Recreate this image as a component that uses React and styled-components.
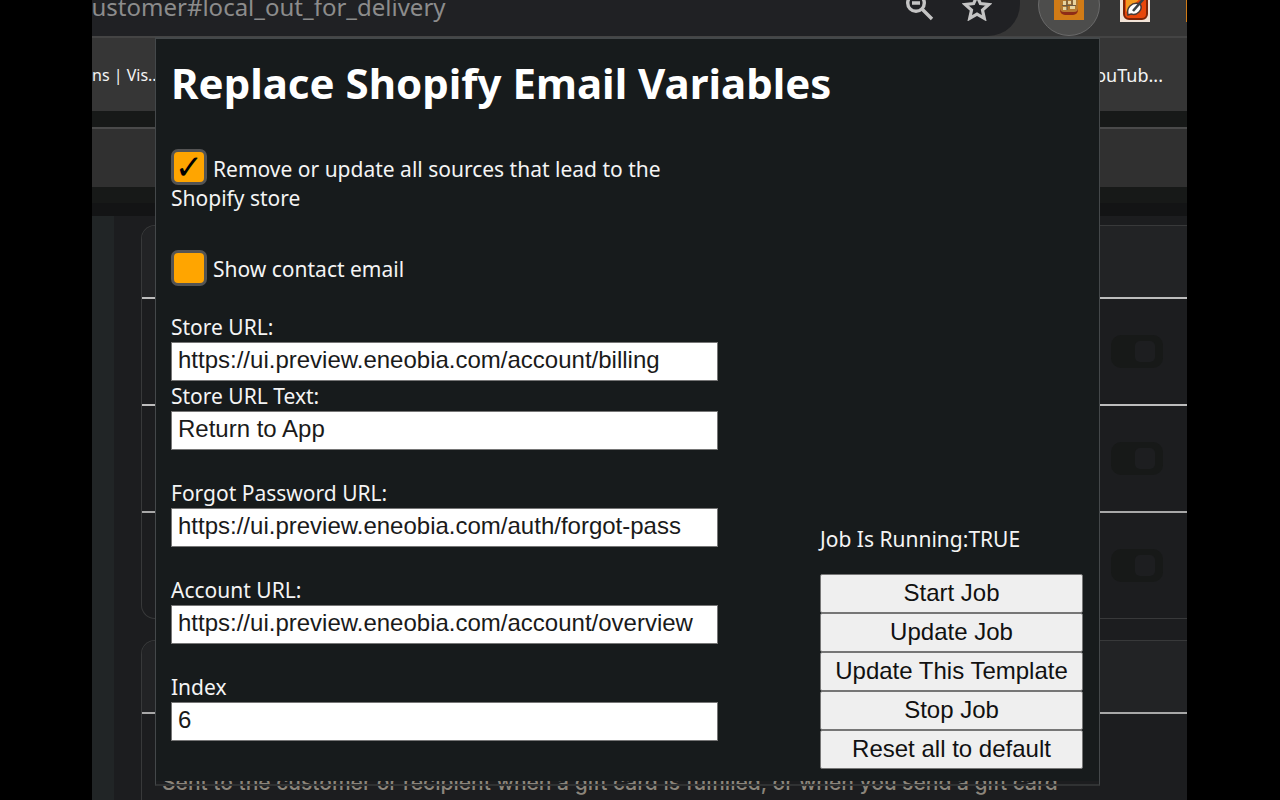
import React, { useState } from "react";
import styled, { createGlobalStyle } from "styled-components";

const Global = createGlobalStyle`
  * { box-sizing: border-box; }
  body { margin: 0; background: #000; color: #f4f4f4; font-family: "Noto Sans", "Open Sans", sans-serif; }
`;

const Screen = styled.div`
  position: relative;
  height: 100vh;
  margin: 0 93px 0 92px;
  overflow: hidden;
  display: flex;
  flex-direction: column;
  background: #171918;
`;

const Toolbar = styled.header`
  display: flex;
  align-items: flex-end;
  height: 36px;
  flex: none;
  background: #363636;
`;

const AddressBar = styled.div`
  flex: 1;
  display: flex;
  align-items: flex-end;
  justify-content: space-between;
  height: 36px;
  padding-right: 28px;
  border-bottom-right-radius: 32px;
  overflow: hidden;
  background: #202124;
`;

const Address = styled.span`
  margin-left: -12px;
  padding-bottom: 13px;
  font-size: 24px;
  line-height: 32px;
  color: #8c8c8c;
  white-space: nowrap;
`;

const AddressIcons = styled.div`
  display: flex;
  gap: 28px;
  padding-bottom: 15px;
`;

const Extensions = styled.div`
  width: 167px;
  height: 36px;
  padding-left: 18px;
  display: flex;
  align-items: flex-end;
  gap: 20px;
  overflow: hidden;
`;

const ActiveExtension = styled.span`
  display: flex;
  align-items: center;
  justify-content: center;
  flex: none;
  width: 62px;
  height: 62px;
  border: 1px solid #6a6a6a;
  border-radius: 50%;
  background: #4d4d4c;
`;

const ExtensionSlot = styled.span`
  flex: none;
  height: 36px;
  padding-bottom: 14px;
  display: flex;
  align-items: flex-end;
`;

const NextExtension = styled.span`
  flex: none;
  width: 30px;
  height: 30px;
  margin: 0 0 14px 16px;
  background: #d17b16;
`;

const Bookmarks = styled.nav`
  display: flex;
  flex: none;
  justify-content: space-between;
  align-items: center;
  height: 75px;
  padding: 0 24px 0 0;
  border-top: 2px solid #444;
  background: #363636;
  font-size: 18px;
  line-height: 24px;
`;

const LeftBookmark = styled.span`
  font-size: 16px;
`;

const Band = styled.div`
  flex: none;
  height: ${(p) => p.$height}px;
  background: ${(p) => p.$color};
  border-top: ${(p) => (p.$line ? "2px solid #4a4a4a" : "0")};
`;

const Page = styled.div`
  display: flex;
  flex: 1;
  min-height: 0;
`;

const Sidebar = styled.div`
  width: 22px;
  background: #212526;
`;

const Content = styled.div`
  flex: 1;
  min-width: 0;
  padding: 9px 0 0 27px;
  display: flex;
  flex-direction: column;
  gap: 21px;
  background: #1c1d1f;
`;

const Card = styled.section`
  flex: none;
  border: 1px solid #38393a;
  border-right: 0;
  border-radius: ${(p) => (p.$open ? "14px 0 0 0" : "14px 0 0 14px")};
  overflow: hidden;
`;

const CardHead = styled.div`
  height: 71px;
  background: #222325;
`;

const CardRow = styled.div`
  display: flex;
  justify-content: flex-end;
  align-items: center;
  height: 107px;
  padding-right: 24px;
  border-top: 2px solid ${(p) => (p.$last ? "#a8a8a8" : "#bdbdbd")};
`;

const Toggle = styled.span`
  display: flex;
  justify-content: flex-end;
  width: 52px;
  height: 33px;
  padding: 6px 8px;
  border-radius: 10px;
  background: #171918;
`;

const Knob = styled.span`
  width: 20px;
  height: 21px;
  border-radius: 5px;
  background: #1d1e20;
`;

const CardText = styled.p`
  margin: 0;
  padding: 54px 0 24px 20px;
  border-top: 2px solid #a8a8a8;
  font: 500 21px/30px "Inter", sans-serif;
  color: #8b857b;
  white-space: nowrap;
`;

const Popup = styled.main`
  position: absolute;
  top: 37px;
  left: 63px;
  right: 87px;
  height: 749px;
  border: 1px solid #44484a;
  border-top-width: 2px;
  border-bottom: 2px solid #303233;
`;

const PopupBody = styled.div`
  height: 742px;
  padding: 14px 16px 12px 15px;
  display: flex;
  flex-direction: column;
  background: #171b1c;
`;

const Title = styled.h1`
  margin: 0 0 42px;
  font-size: 42px;
  line-height: 60px;
  font-weight: 700;
  color: #fff;
`;

const Columns = styled.div`
  flex: 1;
  display: flex;
  justify-content: space-between;
`;

const Fields = styled.form`
  width: 547px;
  font-size: 21px;
  line-height: 29px;
`;

const CheckLabel = styled.label`
  display: block;
  width: 510px;
  margin-bottom: ${(p) => p.$gap}px;
`;

const Check = styled.input`
  appearance: none;
  display: inline-grid;
  place-items: center;
  width: 36px;
  height: 36px;
  margin: -9px 6px -1px 0;
  vertical-align: middle;
  border: 3px solid #545454;
  border-radius: 7px;
  background: #ffa500;
  &:checked::after {
    content: "✓";
    color: #000;
    font: bold 34px/30px "DejaVu Sans", sans-serif;
  }
`;

const Field = styled.div`
  display: flex;
  flex-direction: column;
  margin-bottom: ${(p) => p.$gap}px;
`;

const TextInput = styled.input`
  width: 100%;
  height: 39px;
  padding: 0 6px 3px;
  border: 1px solid #767676;
  border-radius: 0;
  background: #fff;
  color: #1a1a1a;
  font: 24px/30px "Liberation Sans", Arial, sans-serif;
`;

const Jobs = styled.aside`
  align-self: flex-end;
  width: 263px;
  font-size: 21px;
  line-height: 30px;
`;

const Status = styled.p`
  margin: 0 0 20px;
`;

const JobButton = styled.button`
  display: block;
  width: 100%;
  height: 39px;
  padding: 0 0 2px;
  border: 1px solid #767676;
  border-radius: 2px;
  background: #efefef;
  color: #111;
  font: 24px/30px "Liberation Sans", Arial, sans-serif;
`;

const ZoomOutIcon = () => (
  <svg width="28" height="28" viewBox="0 0 28 28" fill="none" stroke="#c4c4c4" strokeWidth="3.4">
    <circle cx="10" cy="10" r="8.3" />
    <path d="M6 10h8M16 16l10 10" />
  </svg>
);

const StarIcon = () => (
  <svg width="30" height="28" viewBox="0 0 30 28" fill="none" stroke="#c4c4c4" strokeWidth="3.2">
    <path d="M15 3l3.4 7.6 8.4.9-6.3 5.6 1.8 8.2-7.3-4.3-7.3 4.3 1.8-8.2-6.3-5.6 8.4-.9z" />
  </svg>
);

const MachineIcon = () => (
  <svg width="30" height="30" viewBox="0 0 30 30">
    <path fill="#d17b16" d="M0 0h30v30H0z" />
    <rect x="6" y="4" width="18" height="21" rx="5" fill="#8e2c17" />
    <rect x="6" y="2" width="18" height="20" rx="4" fill="#b5792f" />
    <path d="M8 5h5v4H8zM15 5h6v3h-6zM9 11h3v4H9zM14 11h3v3h-3zM19 10h3v5h-3zM9 17h4v3H9zM16 16h5v3h-5z" fill="#e7d3a0" />
    <path d="M13 9v11M8 15.500h14M18 8v8" stroke="#6b5a46" strokeWidth="1.200" />
  </svg>
);

const RocketIcon = () => (
  <svg width="30" height="30" viewBox="0 0 30 30">
    <path fill="#f3e4d8" d="M0 0h30v30H0z" />
    <rect x="4" y="0" width="23" height="27" rx="5" fill="#e8470b" stroke="#7d2407" strokeWidth="2" />
    <path d="M6 2h19L6 20z" fill="#f59a20" />
    <path d="M8 23c-1-4 0-7 2-9 3-3 7-3 10-2 2 3 1 6-1 8-2 2-5 3-8 2z" fill="#fff" stroke="#4a3a36" strokeWidth="1.500" />
    <path d="M13 19L26 4" stroke="#3a4145" strokeWidth="2.600" />
  </svg>
);

const JOB_ACTIONS = ["Start Job", "Update Job", "Update This Template", "Stop Job", "Reset all to default"];

const FIELDS = [
  { id: "store-url", label: "Store URL:", value: "https://ui.preview.eneobia.com/account/billing", gap: 1 },
  { id: "store-text", label: "Store URL Text:", value: "Return to App", gap: 29 },
  { id: "forgot-url", label: "Forgot Password URL:", value: "https://ui.preview.eneobia.com/auth/forgot-pass", gap: 29 },
  { id: "account-url", label: "Account URL:", value: "https://ui.preview.eneobia.com/account/overview", gap: 29 },
  { id: "index", label: "Index", value: "6", gap: 0 },
];

export default function App() {
  const [updateSources, setUpdateSources] = useState(true);
  const [showEmail, setShowEmail] = useState(false);
  return (
    <Screen>
      <Global />
      <Toolbar>
        <AddressBar>
          <Address>customer#local_out_for_delivery</Address>
          <AddressIcons>
            <ZoomOutIcon />
            <StarIcon />
          </AddressIcons>
        </AddressBar>
        <Extensions>
          <ActiveExtension><MachineIcon /></ActiveExtension>
          <ExtensionSlot><RocketIcon /></ExtensionSlot>
          <NextExtension />
        </Extensions>
      </Toolbar>
      <Bookmarks>
        <LeftBookmark>ns | Vis...</LeftBookmark>
        <span>ouTub...</span>
      </Bookmarks>
      <Band $height={16} $color="#171918" />
      <Band $height={60} $color="#303030" $line />
      <Band $height={16} $color="#171918" />
      <Band $height={13} $color="#131415" />
      <Page>
        <Sidebar />
        <Content>
          <Card>
            <CardHead />
            <CardRow><Toggle><Knob /></Toggle></CardRow>
            <CardRow><Toggle><Knob /></Toggle></CardRow>
            <CardRow $last><Toggle><Knob /></Toggle></CardRow>
          </Card>
          <Card $open>
            <CardHead />
            <CardText>Sent to the customer or recipient when a gift card is fulfilled, or when you send a gift card</CardText>
          </Card>
        </Content>
      </Page>
      <Popup>
        <PopupBody>
          <Title>Replace Shopify Email Variables</Title>
          <Columns>
            <Fields>
              <CheckLabel $gap={42}>
                <Check type="checkbox" checked={updateSources} onChange={(e) => setUpdateSources(e.target.checked)} />
                Remove or update all sources that lead to the Shopify store
              </CheckLabel>
              <CheckLabel $gap={28}>
                <Check type="checkbox" checked={showEmail} onChange={(e) => setShowEmail(e.target.checked)} />
                Show contact email
              </CheckLabel>
              {FIELDS.map((f) => (
                <Field key={f.id} $gap={f.gap}>
                  <label htmlFor={f.id}>{f.label}</label>
                  <TextInput id={f.id} defaultValue={f.value} />
                </Field>
              ))}
            </Fields>
            <Jobs>
              <Status>Job Is Running:TRUE</Status>
              {JOB_ACTIONS.map((name) => (
                <JobButton key={name} type="button">{name}</JobButton>
              ))}
            </Jobs>
          </Columns>
        </PopupBody>
      </Popup>
    </Screen>
  );
}
